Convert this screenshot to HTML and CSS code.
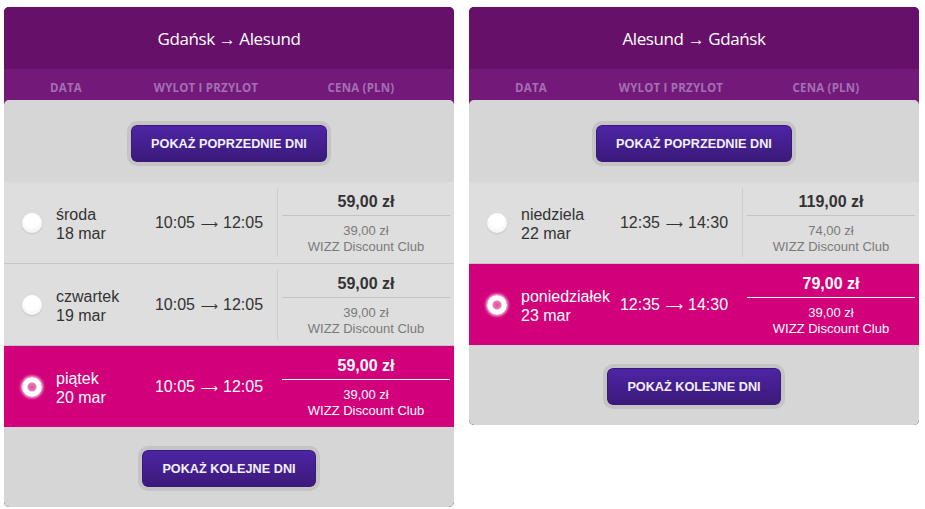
FILE: index.html
```html
<!DOCTYPE html>
<html lang="pl">
<head>
  <meta charset="UTF-8" />
  <title>Wybierz lot</title>
  <meta name="viewport" content="width=device-width, initial-scale=1.0" />
  <link rel="stylesheet" href="styles.css">
</head>
<body>
  <div class="flights">

    <section class="panel">
      <h2 class="route">Gdańsk → Alesund</h2>
      <div class="colhead">
        <span>DATA</span>
        <span>WYLOT I PRZYLOT</span>
        <span>CENA (PLN)</span>
      </div>
      <div class="body">
        <div class="more top"><button class="btn">POKAŻ POPRZEDNIE DNI</button></div>

        <div class="row">
          <span class="radio"></span>
          <div class="date">środa<br>18 mar</div>
          <div class="time">10:05 <span class="arr">⟶</span> 12:05</div>
          <div class="price">
            <div class="main">59,00 zł</div>
            <div class="club">39,00 zł<br>WIZZ Discount Club</div>
          </div>
        </div>

        <div class="row">
          <span class="radio"></span>
          <div class="date">czwartek<br>19 mar</div>
          <div class="time">10:05 <span class="arr">⟶</span> 12:05</div>
          <div class="price">
            <div class="main">59,00 zł</div>
            <div class="club">39,00 zł<br>WIZZ Discount Club</div>
          </div>
        </div>

        <div class="row selected">
          <span class="radio"></span>
          <div class="date">piątek<br>20 mar</div>
          <div class="time">10:05 <span class="arr">⟶</span> 12:05</div>
          <div class="price">
            <div class="main">59,00 zł</div>
            <div class="club">39,00 zł<br>WIZZ Discount Club</div>
          </div>
        </div>

        <div class="more"><button class="btn">POKAŻ KOLEJNE DNI</button></div>
      </div>
    </section>

    <section class="panel">
      <h2 class="route">Alesund → Gdańsk</h2>
      <div class="colhead">
        <span>DATA</span>
        <span>WYLOT I PRZYLOT</span>
        <span>CENA (PLN)</span>
      </div>
      <div class="body">
        <div class="more top"><button class="btn">POKAŻ POPRZEDNIE DNI</button></div>

        <div class="row">
          <span class="radio"></span>
          <div class="date">niedziela<br>22 mar</div>
          <div class="time">12:35 <span class="arr">⟶</span> 14:30</div>
          <div class="price">
            <div class="main">119,00 zł</div>
            <div class="club">74,00 zł<br>WIZZ Discount Club</div>
          </div>
        </div>

        <div class="row selected">
          <span class="radio"></span>
          <div class="date">poniedziałek<br>23 mar</div>
          <div class="time">12:35 <span class="arr">⟶</span> 14:30</div>
          <div class="price">
            <div class="main">79,00 zł</div>
            <div class="club">39,00 zł<br>WIZZ Discount Club</div>
          </div>
        </div>

        <div class="more"><button class="btn">POKAŻ KOLEJNE DNI</button></div>
      </div>
    </section>

  </div>
</body>
</html>
```

FILE: styles.css
```css
:root {
  --purple-dark: #661069;
  --purple: #72197a;
  --purple-label: #a46fb5;
  --grey-bg: #d6d6d6;
  --row-bg: #dedede;
  --line: #c6c6c6;
  --pink: #d2007a;
  --text: #333;
  --muted: #7a7a7a;
}

body {
  margin: 0;
  padding: 7px 4px;
  font-family: 'Liberation Sans', Arial, sans-serif;
  color: var(--text);
  background: #fff;
}

.flights {
  display: flex;
  align-items: flex-start;
  gap: 15px;
}

.panel {
  width: 450px;
  background-color: var(--purple);
  border-radius: 5px;
  overflow: hidden;
}

.route {
  margin: 0;
  height: 62px;
  line-height: 64px;
  background-color: var(--purple-dark);
  color: #fff;
  text-align: center;
  font-family: 'Open Sans', sans-serif;
  font-weight: 400;
  font-size: 17px;
  letter-spacing: -0.4px;
}

.colhead {
  display: grid;
  grid-template-columns: 124px 156px 154px;
  padding: 13px 0 6px;
  font-family: 'Open Sans', sans-serif;
  font-weight: 700;
  font-size: 11.5px;
  line-height: 12px;
  letter-spacing: 0.2px;
  color: var(--purple-label);
  text-align: center;
}

.body {
  background-color: var(--grey-bg);
  border-radius: 5px;
}

.more {
  display: flex;
  justify-content: center;
  padding: 19px 0 16px;
}

.more.top {
  padding-top: 21px;
}

.btn {
  height: 45px;
  padding: 0 20px;
  border: 4px solid #c4c4c4;
  border-radius: 10px;
  background: linear-gradient(#4e25a6, #3b1979);
  background-clip: padding-box;
  box-shadow: inset 0 0 0 1px #3a1a78;
  color: #f2f0ff;
  font-family: 'Liberation Sans', Arial, sans-serif;
  font-weight: 700;
  font-size: 12.7px;
  cursor: pointer;
}

.row {
  display: grid;
  grid-template-columns: 34px 96px 125px 1fr;
  align-items: center;
  height: 81px;
  padding-left: 18px;
  background-color: var(--row-bg);
  border-bottom: 1px solid var(--line);
}

.row.selected {
  background-color: var(--pink);
  color: #fff;
  border-bottom: none;
}

.radio {
  width: 20px;
  height: 20px;
  border-radius: 50%;
  background: radial-gradient(circle at 50% 35%, #fff 40%, #ececec 100%);
  box-shadow: 0 1px 2px rgba(0, 0, 0, 0.12);
}

.selected .radio {
  background: radial-gradient(circle, #de4f9c 0, #e77ab5 4px, #fff 5px);
  box-shadow: 0 0 3px 1px rgba(255, 255, 255, 0.8);
}

.date {
  padding-top: 2px;
  font-size: 16px;
  line-height: 19px;
  white-space: nowrap;
}

.time {
  padding-right: 11px;
  font-size: 16px;
  text-align: center;
  white-space: nowrap;
}

/* long thin arrow between departure and arrival */
.arr {
  padding: 0 1px;
  font-family: 'DejaVu Sans', sans-serif;
  font-size: 12px;
}

.price {
  align-self: stretch;
  margin: 6px 0;
  padding: 0 4px;
  border-left: 1px solid #cdcdcd;
  text-align: center;
}

.price .main {
  height: 27px;
  line-height: 28px;
  font-weight: 700;
  font-size: 16px;
  border-bottom: 1px solid #c4c4c4;
}

.price .club {
  padding-top: 7px;
  font-size: 13px;
  line-height: 16px;
  color: var(--muted);
}

.selected .price {
  border-left-color: transparent;
}

.selected .price .main {
  border-bottom-color: #fff;
}

.selected .price .club {
  color: #fff;
}
```
